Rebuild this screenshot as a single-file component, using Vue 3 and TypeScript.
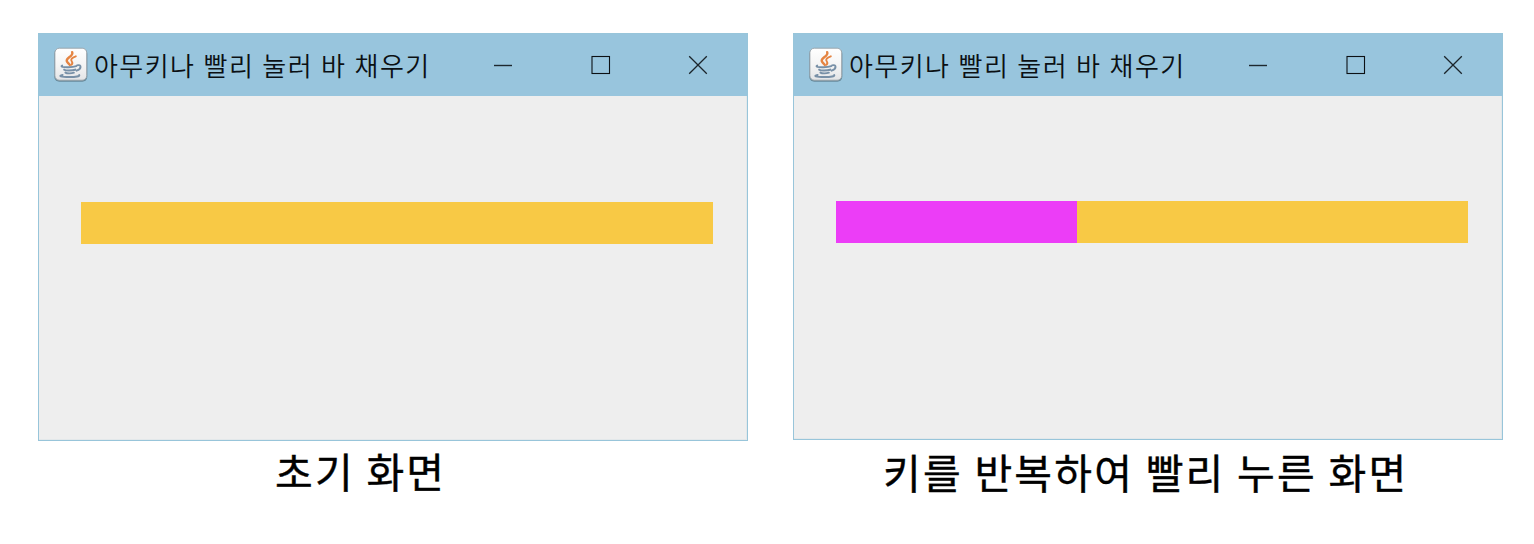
<script setup lang="ts">
interface Demo {
  id: string
  caption: string
  progress: number
}

const title = '아무키나 빨리 눌러 바 채우기'
const demos: Demo[] = [
  { id: 'initial', caption: '초기 화면', progress: 0 },
  { id: 'filled', caption: '키를 반복하여 빨리 누른 화면', progress: 241 },
]
</script>

<template>
  <main class="page">
    <figure v-for="demo in demos" :key="demo.id" class="demo" :class="demo.id">
      <section class="window">
        <header class="titlebar">
          <svg class="java" viewBox="0 0 36 36" aria-hidden="true">
            <defs>
              <linearGradient :id="'tile-' + demo.id" x1="0" y1="0" x2="0" y2="1">
                <stop offset="0" stop-color="#ffffff" />
                <stop offset="0.55" stop-color="#f4f4f4" />
                <stop offset="1" stop-color="#e3e4e6" />
              </linearGradient>
            </defs>
            <rect x="1.3" y="1.8" width="33" height="33" rx="5" fill="#53707f" opacity="0.7" />
            <rect x="1.9" y="1.2" width="31.8" height="32" rx="4.5" :fill="`url(#tile-${demo.id})`" stroke="#98a2a8" stroke-width="0.9" />
            <g fill="none" stroke="#e58442" stroke-linecap="round">
              <path d="M19.2 5.2c1.7 4.2-6.6 5.3-5.4 9 .4 1.3 2 2.3 3 3.7" stroke-width="2.4" />
              <path d="M22.8 9.3c-3.9 1.3-5.6 3.1-4 5.2 1.1 1.5.8 2.2-.3 3.2" stroke-width="1.9" />
            </g>
            <g fill="none" stroke="#7890a7" stroke-linecap="round">
              <path d="M9.2 18.6c-2 1 .5 1.7 6.2 1.6 3.5 0 6.2-.4 7.8-1" stroke-width="1.9" />
              <path d="M11.2 22.7c1.3 1.1 7.8 1 11.1 0" stroke-width="2.1" />
              <path d="M12.4 25.6c1.6 1 6.1.9 8.5.1" stroke-width="1.9" />
              <path d="M24 18.3c4.8-1.3 4.8 3.7-.4 5.4" stroke-width="1.9" />
              <path d="M9.6 27.9c-4.5 1-2.2 2.2 6.8 2.2 6.9 0 10.5-.8 9.8-2" stroke-width="2" />
            </g>
          </svg>
          <h1 class="title">{{ title }}</h1>
          <div class="controls">
            <svg viewBox="0 0 20 20" aria-label="Minimize"><path d="M1 10.5h18" stroke="#1d282e" stroke-width="1.4" /></svg>
            <svg viewBox="0 0 20 20" aria-label="Maximize"><rect x="1" y="1.5" width="17.5" height="17" fill="none" stroke="#0c1114" stroke-width="1.1" /></svg>
            <svg viewBox="0 0 20 20" aria-label="Close"><path d="M1.2 1.2l17.6 17.6M18.8 1.2L1.2 18.8" fill="none" stroke="#1b252b" stroke-width="1.3" /></svg>
          </div>
        </header>
        <div class="content">
          <div class="bar">
            <div class="fill" :style="{ width: demo.progress + 'px' }"></div>
          </div>
        </div>
      </section>
      <figcaption class="caption">{{ demo.caption }}</figcaption>
    </figure>
  </main>
</template>

<style>
body {
  background: #fff;
}
</style>

<style scoped>
.page {
  box-sizing: border-box;
  width: 1534px;
  height: 544px;
  padding: 33px 31px 0 38px;
  display: flex;
  gap: 45px;
  overflow: hidden;
  background: #fff;
  font-family: "Noto Sans CJK KR", sans-serif;
}
.demo {
  width: 710px;
  margin: 0;
}
.window {
  box-sizing: border-box;
  width: 710px;
  height: 408px;
  border: 1px solid #98c5da;
  background: #eee;
  box-shadow: inset -1px -1px #e3e8ea;
}
.filled .window {
  height: 407px;
}
.titlebar {
  height: 61.5px;
  display: flex;
  align-items: center;
  background: #98c5dd;
}
.java {
  width: 36px;
  height: 36px;
  margin-left: 14px;
  flex: none;
}
.title {
  margin: 0 0 0 5px;
  font-size: 26px;
  font-weight: 350;
  line-height: 40px;
  letter-spacing: 1.45px;
  word-spacing: 0.8px;
  white-space: nowrap;
  color: #0b1013;
}
.controls {
  display: flex;
  gap: 77.5px;
  margin-left: auto;
  margin-right: 39px;
}
.controls svg {
  width: 20px;
  height: 20px;
}
.content {
  padding: 106px 0 0 42px;
}
.filled .content {
  padding-top: 105.5px;
}
.bar {
  width: 632px;
  height: 42px;
  background: #f8c945;
}
.fill {
  height: 100%;
  background: #ec3df7;
}
.caption {
  height: 62px;
  margin-left: 237px;
  font-size: 41px;
  font-weight: 400;
  line-height: 58px;
  letter-spacing: 2.2px;
  word-spacing: 0.2px;
  white-space: nowrap;
  color: #000;
  -webkit-text-stroke: 0.4px #000;
}
.filled .caption {
  margin-left: 90px;
  line-height: 62px;
}
</style>
